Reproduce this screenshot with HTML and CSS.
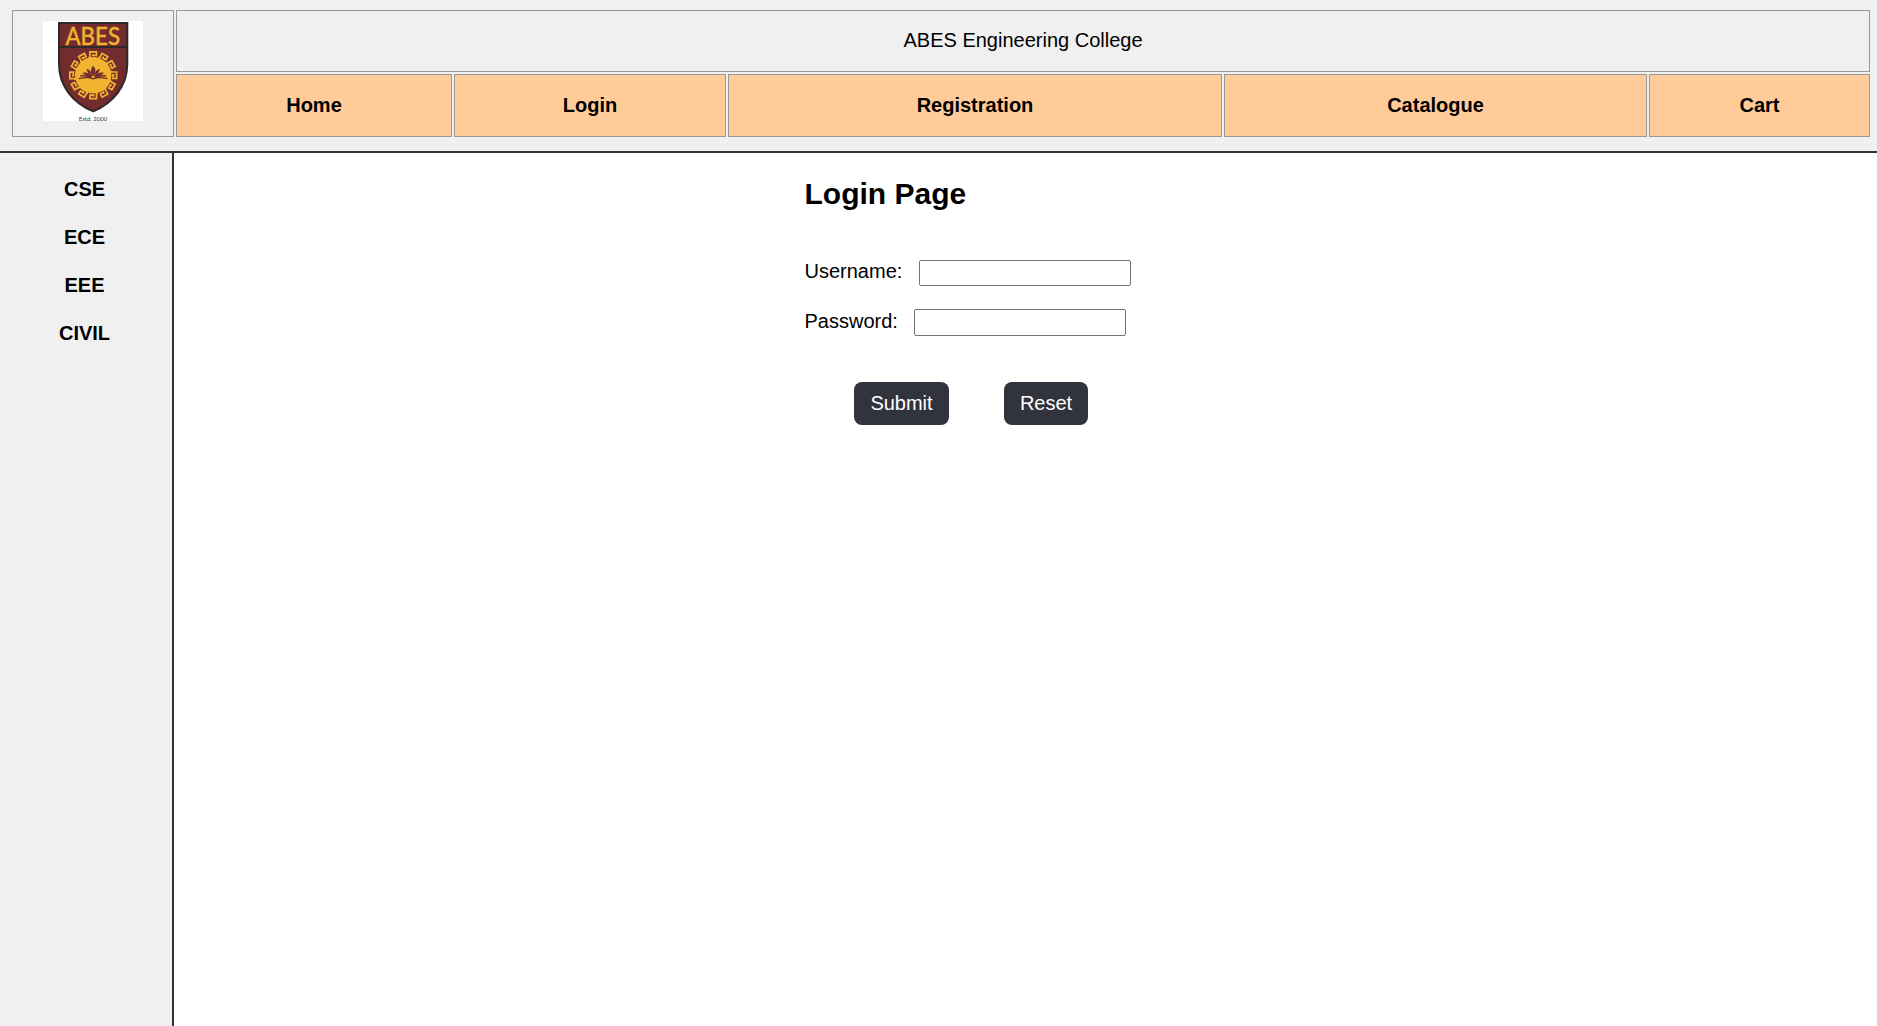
FILE: index.html
```html
<!DOCTYPE html>
<html lang="en">
<head>
<meta charset="utf-8">
<title>ABES Engineering College</title>
<link rel="stylesheet" href="styles.css">
</head>
<body>
<header class="header">
  <div class="cell logo-cell">
    <svg class="logo" viewBox="0 0 100 100" role="img" aria-label="ABES">
      <defs>
        <path id="key" d="M-4.6-18.2H-3.3V-23.4H3.2V-19.8H-.4V-21.3" fill="none" stroke="#f2b430" stroke-width="1.7"/>
      </defs>
      <path d="M16 2H84.300V43C84.300 65 70 82 50.200 90.300C30 82 16 65 16 43Z" fill="#722c2d" stroke="#2d292b" stroke-width="2"/>
      <path d="M16 26H84" stroke="#2d292b" stroke-width="2"/>
      <text class="logo-name" x="22.500" y="23.700" textLength="54.500" lengthAdjust="spacingAndGlyphs">ABES</text>
      <g transform="translate(50.200 54.300)">
        <circle r="18.200" fill="#f2b430"/>
        <use href="#key"/>
        <use href="#key" transform="rotate(30)"/>
        <use href="#key" transform="rotate(60)"/>
        <use href="#key" transform="rotate(90)"/>
        <use href="#key" transform="rotate(120)"/>
        <use href="#key" transform="rotate(150)"/>
        <use href="#key" transform="rotate(180)"/>
        <use href="#key" transform="rotate(210)"/>
        <use href="#key" transform="rotate(240)"/>
        <use href="#key" transform="rotate(270)"/>
        <use href="#key" transform="rotate(300)"/>
        <use href="#key" transform="rotate(330)"/>
        <g fill="#722c2d">
          <path d="M0-9.500Q-4.500-5 0 1.500Q4.500-5 0-9.500"/>
          <path d="M-6.500-6.500Q-6-1 -1 1.500Q-1.500-5 -6.500-6.500M6.500-6.500Q6-1 1 1.500Q1.500-5 6.500-6.500"/>
          <path d="M-11-2.500Q-5-4 -1 2Q-7 1.500 -11-2.500M11-2.500Q5-4 1 2Q7 1.500 11-2.500"/>
        </g>
        <path d="M-13 .5Q-5 0 -1.500 2.300M13 .5Q5 0 1.500 2.300M-14.500 3.300Q-5 1.300 0 3.600Q5 1.300 14.500 3.300" fill="none" stroke="#722c2d" stroke-width="1.400"/>
      </g>
      <text class="logo-year" x="35.800" y="99.900" textLength="28.300" lengthAdjust="spacingAndGlyphs">Estd. 2000</text>
    </svg>
  </div>
  <div class="cell title">ABES Engineering College</div>
  <nav class="nav">
    <a class="cell">Home</a>
    <a class="cell">Login</a>
    <a class="cell">Registration</a>
    <a class="cell">Catalogue</a>
    <a class="cell">Cart</a>
  </nav>
</header>
<div class="body">
  <aside class="sidebar">
    <a>CSE</a>
    <a>ECE</a>
    <a>EEE</a>
    <a>CIVIL</a>
  </aside>
  <main class="main">
    <form class="form">
      <h2>Login Page</h2>
      <div class="field"><label for="user">Username:</label><input id="user" type="text"></div>
      <div class="field password"><label for="pass">Password:</label><input id="pass" type="password"></div>
      <div class="actions">
        <button class="submit" type="button">Submit</button>
        <button class="reset" type="reset">Reset</button>
      </div>
    </form>
  </main>
</div>
</body>
</html>
```
FILE: styles.css
```css
* { box-sizing: border-box; }
body {
  margin: 0;
  height: 100vh;
  display: flex;
  flex-direction: column;
  background: #fff;
  color: #000;
  font: 20px/24px "Liberation Sans", Arial, sans-serif;
}
.header {
  height: 153px;
  flex: none;
  padding: 10px 7px 14px 12px;
  background: #f0f0f0;
  border-bottom: 2px solid #333;
  display: grid;
  grid-template-columns: 162px 1fr;
  grid-template-rows: 62px 63px;
  gap: 2px;
}
.cell {
  border: 1px solid #999;
  display: flex;
  align-items: center;
  justify-content: center;
}
.logo-cell { grid-row: 1 / 3; align-items: flex-start; padding-top: 10px; }
.logo { width: 100px; height: 100px; background: #fff; }
.logo-name { font: 25px Lato, sans-serif; fill: #f2b430; stroke: #f2b430; stroke-width: .5px; }
.logo-year { font: 5.8px Lato, sans-serif; fill: #333; }
.title { padding-bottom: 2px; }
.nav {
  display: grid;
  grid-template-columns: 276px 272px 494px 423px 1fr;
  gap: 2px;
  font-weight: bold;
}
.nav .cell { background: #fc9; padding-bottom: 1px; }
.body { flex: 1; display: flex; }
.sidebar {
  width: 174px;
  padding: 24px 3px 0 0;
  background: #f0f0f0;
  border-right: 2px solid #333;
  display: flex;
  flex-direction: column;
  gap: 24px;
  align-items: center;
  font-weight: bold;
}
.main { flex: 1; padding: 23px 0 0 630.500px; }
h2 { margin: 0 0 47px; font-size: 30px; line-height: 36px; }
.field { display: flex; align-items: flex-start; height: 50px; }
.field input {
  width: 212px;
  height: 26px;
  margin: 1px 0 0 17px;
  padding: 1px 2px;
  border: 1px solid #767676;
  border-radius: 2px;
  background: #fff;
}
.field.password input { height: 27px; margin: 0 0 0 16px; }
.actions { display: flex; gap: 55px; padding: 23px 0 0 49.500px; }
button {
  height: 43px;
  padding: 0 0 1px;
  border: 0;
  border-radius: 8px;
  background: #31333d;
  color: #fff;
  font: inherit;
}
.submit { width: 95px; }
.reset { width: 84px; }
```
